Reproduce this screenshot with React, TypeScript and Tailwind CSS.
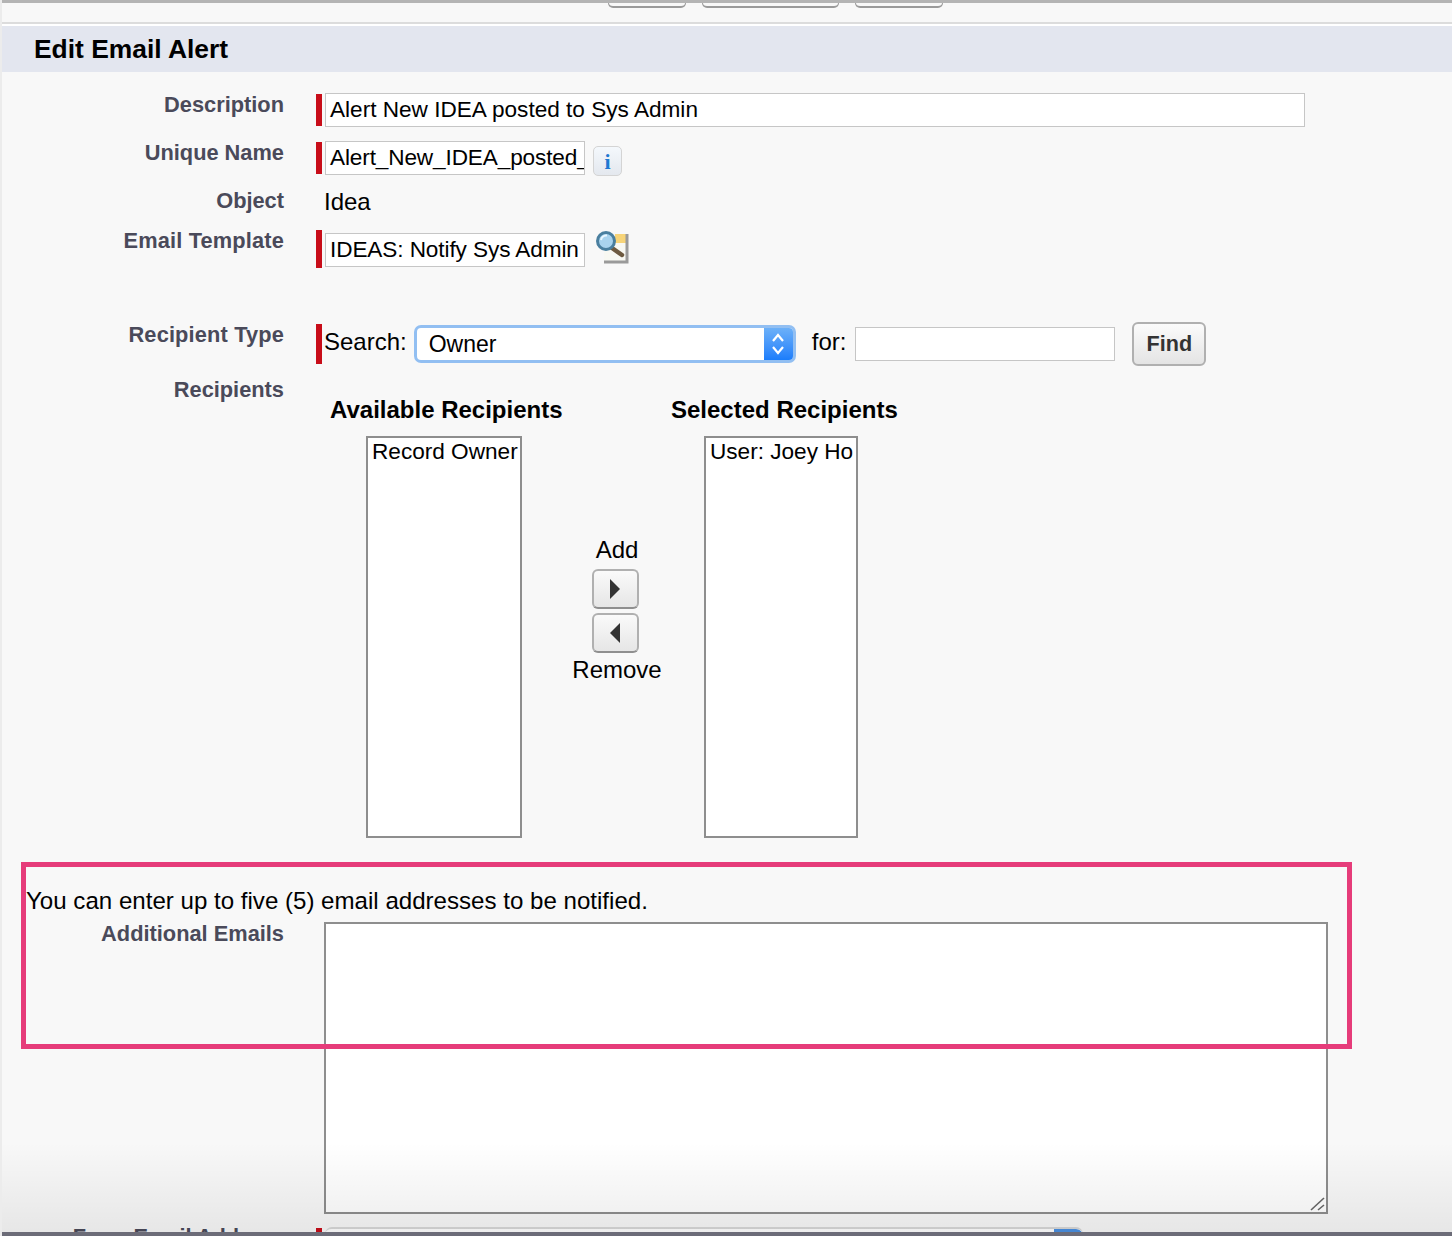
const sans = "font-['Liberation_Sans',Arial,sans-serif]";

const Label = ({ text, className = "" }: { text: string; className?: string }) => (
  <div className={`w-[284px] shrink-0 text-right text-[21.8px] leading-[26px] font-bold text-[#4a4a5a] ${className}`}>{text}</div>
);

const Required = ({ className }: { className: string }) => (
  <div className={`ml-[32px] w-[6px] shrink-0 bg-[#c80d19] ${className}`} />
);

const Field = ({ value, className }: { value: string; className: string }) => (
  <div className={`ml-[3px] overflow-hidden border border-[#c6c6c6] bg-white pl-[4px] text-[22.6px] leading-[32px] whitespace-nowrap text-black ${className}`}>
    {value}
  </div>
);

const ArrowButton = ({ dir }: { dir: "left" | "right" }) => (
  <div className="-ml-[4px] flex h-[40px] w-[47px] shrink-0 items-center justify-center rounded-[6px] border-2 border-[#b0b0b0] border-b-[#8f8f8f] bg-gradient-to-b from-[#fafafa] to-[#e6e6e6]">
    <svg width="12" height="20" viewBox="0 0 12 20">
      <path d={dir === "right" ? "M1 0L11 10L1 20Z" : "M11 0L1 10L11 20Z"} fill="#333" />
    </svg>
  </div>
);

const ListBox = ({ item, className }: { item: string; className: string }) => (
  <div className={`h-[402px] border-2 border-[#8e8e8e] bg-white pl-[4px] text-[22.6px] leading-[28px] whitespace-nowrap text-black ${className}`}>
    {item}
  </div>
);

export default function App() {
  return (
    <div className={`relative flex h-[1236px] w-[1452px] flex-col overflow-hidden bg-[#f8f8f8] ${sans}`}>
      <div className="h-[3px] shrink-0 bg-[#b4b4b4]" />
      <div className="ml-[608px] flex h-[5px] shrink-0 gap-[16px]">
        <div className="w-[78px] rounded-b-[5px] border-x border-b-2 border-[#9a9a9a]" />
        <div className="w-[137px] rounded-b-[5px] border-x border-b-2 border-[#9a9a9a]" />
        <div className="w-[88px] rounded-b-[5px] border-x border-b-2 border-[#9a9a9a]" />
      </div>
      <div className="mt-[14px] h-[2px] shrink-0 bg-[#dcdcdc]" />
      <div className="h-[2px] shrink-0 bg-white" />
      <div className="flex h-[46px] shrink-0 items-center bg-[#e3e6ef] pt-[2px] pl-[34px] text-[26.4px] font-bold text-black">
        Edit Email Alert
      </div>

      <div className="mt-[21px] flex h-[34px] shrink-0">
        <Label text="Description" className="-mt-[1px]" />
        <Required className="mt-[1px] h-[32px]" />
        <Field value="Alert New IDEA posted to Sys Admin" className="h-[34px] w-[980px]" />
      </div>

      <div className="mt-[14px] flex h-[36px] shrink-0">
        <Label text="Unique Name" className="-mt-[1px]" />
        <Required className="mt-[1px] h-[32px]" />
        <Field value="Alert_New_IDEA_posted_" className="h-[34px] w-[260px] tracking-[-0.13px]" />
        <div className="mt-[5px] ml-[8px] flex h-[30px] w-[29px] items-center justify-center rounded-[5px] border border-[#d4d4d4] bg-gradient-to-b from-[#f4f8fc] to-[#e4e8ee] font-['Liberation_Serif',serif] text-[22px] font-bold text-[#1f78d1]">
          i
        </div>
      </div>

      <div className="mt-[12px] flex h-[30px] shrink-0">
        <Label text="Object" className="-mt-[1px]" />
        <div className="-mt-[1px] ml-[40px] text-[24px] leading-[28px] text-black">Idea</div>
      </div>

      <div className="mt-[10px] flex h-[38px] shrink-0">
        <Label text="Email Template" className="-mt-[1px] tracking-[0.15px]" />
        <Required className="mt-[1px] h-[38px]" />
        <Field value="IDEAS: Notify Sys Admin" className="mt-[4px] h-[34px] w-[260px] tracking-[-0.1px]" />
        <svg className="mt-[1px] ml-[10px]" width="34" height="34" viewBox="0 0 34 34">
          <path d="M9 4H32V31H9Z" fill="#f8f8f2" />
          <path d="M20 4H31V13H20Z" fill="#f7d478" />
          <path d="M32 4V32H9" fill="none" stroke="#9a9a9a" strokeWidth="3" />
          <path d="M17 18L27 25" stroke="#6e5a40" strokeWidth="4.5" strokeLinecap="round" />
          <circle cx="11" cy="11" r="8.5" fill="#a9d3ee" stroke="#4a7f9f" strokeWidth="3" />
          <path d="M6 10a5.5 5.5 0 0 1 6-4.5" stroke="#eaf7ff" strokeWidth="2" fill="none" />
        </svg>
      </div>

      <div className="mt-[57px] flex h-[40px] shrink-0">
        <Label text="Recipient Type" className="-mt-[2px] tracking-[0.15px]" />
        <Required className="h-[40px]" />
        <div className="ml-[2px] pt-[4px] text-[24px] leading-[28px] text-black">Search:</div>
        <div className="mt-[1px] ml-[7px] flex h-[38px] w-[382px] overflow-hidden rounded-[7px] border-[3px] border-[#92bff2] bg-white">
          <div className="flex-1 pl-[12px] text-[23px] leading-[32px] text-black">Owner</div>
          <div className="flex w-[29px] items-center justify-center bg-gradient-to-b from-[#6cb0f8] to-[#1a7dfb]">
            <svg width="14" height="24" viewBox="0 0 14 24" fill="none" stroke="white" strokeWidth="2.2">
              <path d="M2 9L7 3L12 9" />
              <path d="M2 15L7 21L12 15" />
            </svg>
          </div>
        </div>
        <div className="ml-[16px] pt-[4px] text-[24px] leading-[28px] text-black">for:</div>
        <div className="mt-[3px] ml-[9px] h-[34px] w-[260px] border border-[#c6c6c6] bg-white" />
        <div className="-mt-[2px] ml-[17px] flex h-[44px] w-[74px] items-center justify-center rounded-[6px] border-2 border-[#b0b0b0] bg-gradient-to-b from-[#fbfbfb] to-[#e4e4e4] text-[21.6px] font-bold text-[#333]">
          Find
        </div>
      </div>

      <div className="mt-[14px] flex h-[474px] shrink-0">
        <Label text="Recipients" className="-mt-[1px]" />
        <div className="flex flex-col pl-[46px]">
          <div className="mt-[18px] flex h-[27px] text-[24px] leading-[27px] font-bold whitespace-nowrap text-black">
            <div className="w-[341px]">Available Recipients</div>
            <div>Selected Recipients</div>
          </div>
          <div className="mt-[13px] flex">
            <ListBox item="Record Owner" className="ml-[36px] w-[156px]" />
            <div className="flex w-[182px] flex-col items-center pt-[100px] pl-[8px] text-[24px] leading-[28px] text-black">
              <div className="pb-[5px]">Add</div>
              <ArrowButton dir="right" />
              <div className="h-[4px] shrink-0" />
              <ArrowButton dir="left" />
              <div className="pt-[3px]">Remove</div>
            </div>
            <ListBox item="User: Joey Ho" className="w-[154px]" />
          </div>
        </div>
      </div>

      <div className="mt-[35px] h-[28px] shrink-0 pl-[26px] text-[24.1px] leading-[28px] text-black">
        You can enter up to five (5) email addresses to be notified.
      </div>
      <div className="mt-[7px] flex h-[292px] shrink-0">
        <Label text="Additional Emails" className="-mt-[1px]" />
        <div className="relative ml-[40px] h-[292px] w-[1004px]">
          <textarea className="block h-full w-full resize-none border-2 border-[#8e8e8e] bg-white outline-none" readOnly />
          <svg className="absolute right-[2px] bottom-[2px]" width="16" height="16" viewBox="0 0 16 16" stroke="#666" strokeWidth="1.6">
            <path d="M1 14L14 2" />
            <path d="M8 14L14 9" />
          </svg>
        </div>
      </div>

      <div className="mt-[14px] flex h-[30px] shrink-0">
        <Label text="From Email Address" className="-mt-[4px]" />
        <Required className="h-[10px]" />
        <div className="-mt-[1px] ml-[3px] flex h-[10px] w-[758px] justify-end overflow-hidden rounded-t-[7px] border-t-2 border-[#d8d8d8] bg-white">
          <div className="w-[29px] rounded-tr-[7px] bg-[#4a90e2]" />
        </div>
      </div>

      {/* highlight drawn over the screenshot */}
      <div className="pointer-events-none absolute top-[862px] left-[21px] h-[187px] w-[1331px] border-[5px] border-[#e63c7a]" />
      {/* window edge and fade at the bottom */}
      <div className="pointer-events-none absolute bottom-[4px] left-0 h-[90px] w-full bg-gradient-to-b from-transparent to-black/[0.07]" />
      <div className="absolute bottom-0 left-0 h-[4px] w-full bg-[#6c6c78]" />
      <div className="absolute top-0 left-0 h-full w-[2px] bg-[#ececec]" />
    </div>
  );
}
